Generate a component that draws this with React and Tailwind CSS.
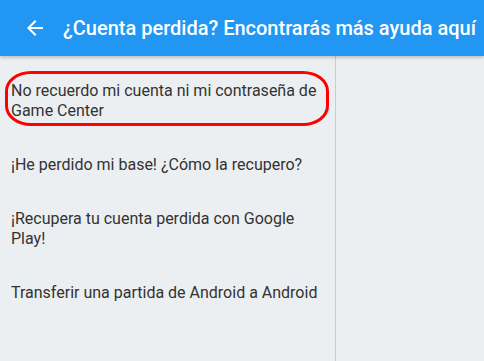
import React from "react";

const items = [
   "No recuerdo mi cuenta ni mi contraseña de Game Center",
   "¡He perdido mi base! ¿Cómo la recupero?",
   "¡Recupera tu cuenta perdida con Google Play!",
   "Transferir una partida de Android a Android",
];

const App = () => {
   return (
      <div
         className="w-[484px] h-[361px] flex flex-col bg-[#eceff1] overflow-hidden"
         style={{ fontFamily: "Roboto, 'Noto Sans', sans-serif" }}
      >
         <header className="h-[56px] shrink-0 flex items-center bg-[#2196f3] text-white relative z-10 shadow-[0_2px_3px_rgba(0,0,0,0.18)]">
            <button className="w-[24px] h-[24px] ml-[23px] flex items-center justify-center">
               <svg width="24" height="24" viewBox="0 0 24 24" fill="white">
                  <path d="M20 11H7.83l5.59-5.59L12 4l-8 8 8 8 1.41-1.41L7.83 13H20v-2z" />
               </svg>
            </button>
            <h1 className="ml-[16px] text-[20px] font-medium whitespace-nowrap">
               ¿Cuenta perdida? Encontrarás más ayuda aquí
            </h1>
         </header>
         <div className="flex flex-1 min-h-0">
            <ul className="w-[336px] shrink-0 border-r border-[#c9cdd1] pt-[8px]">
               {items.map((text, i) => (
                  <li key={i} className="relative px-[11px] py-[17px] text-[16px] leading-[20px] text-[#333]">
                     {text}
                     {i === 0 && (
                        <span className="absolute left-[5px] right-[6px] top-[7px] bottom-[12px] border-[3px] border-[#ff0000] rounded-[26px/20px]" />
                     )}
                  </li>
               ))}
            </ul>
            <div className="flex-1" />
         </div>
      </div>
   );
};

export default App;
